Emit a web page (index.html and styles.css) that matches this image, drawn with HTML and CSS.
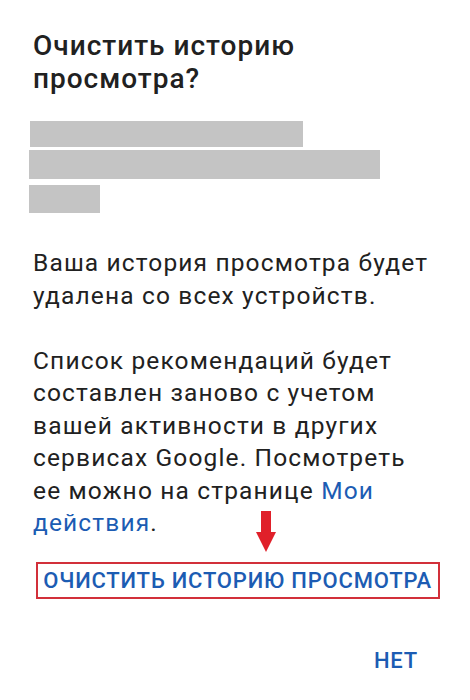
FILE: index.html
```html
<!DOCTYPE html>
<html lang="ru">
<head>
<meta charset="utf-8">
<link rel="stylesheet" href="styles.css">
</head>
<body>
<div class="dialog">
  <h1 class="title">Очистить историю просмотра?</h1>
  <div class="redacted">
    <div class="bar bar-1"></div>
    <div class="bar bar-2"></div>
    <div class="bar bar-3"></div>
  </div>
  <div class="content">
    <p class="text">Ваша история просмотра будет удалена со всех устройств.</p>
    <p class="text">Список рекомендаций будет составлен заново с учетом вашей активности в других сервисах Google. Посмотреть ее можно на странице <a class="link" href="#">Мои действия</a>.</p>
    <svg class="arrow" width="22" height="42" viewBox="0 0 22 42"><path d="M6 0H16V21H21L11 41L1 21H6Z" fill="#e0202a"/></svg>
  </div>
  <div class="actions">
    <span class="btn btn-primary">ОЧИСТИТЬ ИСТОРИЮ ПРОСМОТРА</span>
    <span class="btn btn-no">НЕТ</span>
  </div>
</div>
</body>
</html>
```
FILE: styles.css
```css
html, body {
  margin: 0;
  padding: 0;
  background: #ffffff;
}
.dialog {
  width: 470px;
  height: 700px;
  box-sizing: border-box;
  padding: 29px 0 0 33px;
  font-family: Roboto, "Noto Sans", sans-serif;
  color: #212121;
}
.title {
  margin: 0;
  font-size: 28px;
  letter-spacing: 1px;
  line-height: 33px;
  font-weight: 500;
  width: 320px;
}
.redacted {
  margin: 26px 0 0 -4px;
  display: flex;
  flex-direction: column;
  align-items: flex-start;
}
.bar {
  background: #c4c4c4;
}
.bar-1 { width: 273px; height: 26px; margin-left: 1px; }
.bar-2 { width: 351px; height: 29px; margin-top: 3px; }
.bar-3 { width: 71px; height: 28px; margin-top: 6px; }
.content {
  position: relative;
  margin-top: 34px;
  width: 404px;
}
.text {
  margin: 0 0 32.5px 0;
  font-size: 24.5px;
  letter-spacing: 1.15px;
  line-height: 32.5px;
}
.text:last-of-type { margin-bottom: 0; }
.link {
  color: #1c5cb3;
  text-decoration: none;
}
.arrow {
  position: absolute;
  left: 222px;
  top: 264px;
}
.actions {
  display: flex;
  flex-direction: column;
  align-items: flex-end;
  padding-right: 30px;
  margin-top: 22.5px;
}
.btn {
  color: #1c5cb3;
  font-weight: 500;
  font-size: 22px;
  letter-spacing: 0.8px;
  line-height: 24px;
}
.btn-primary {
  border: 2px solid #d2303a;
  padding: 5px 6px 4px 5px;
}
.btn-no {
  margin-top: 49.5px;
  margin-right: 22px;
}
```
